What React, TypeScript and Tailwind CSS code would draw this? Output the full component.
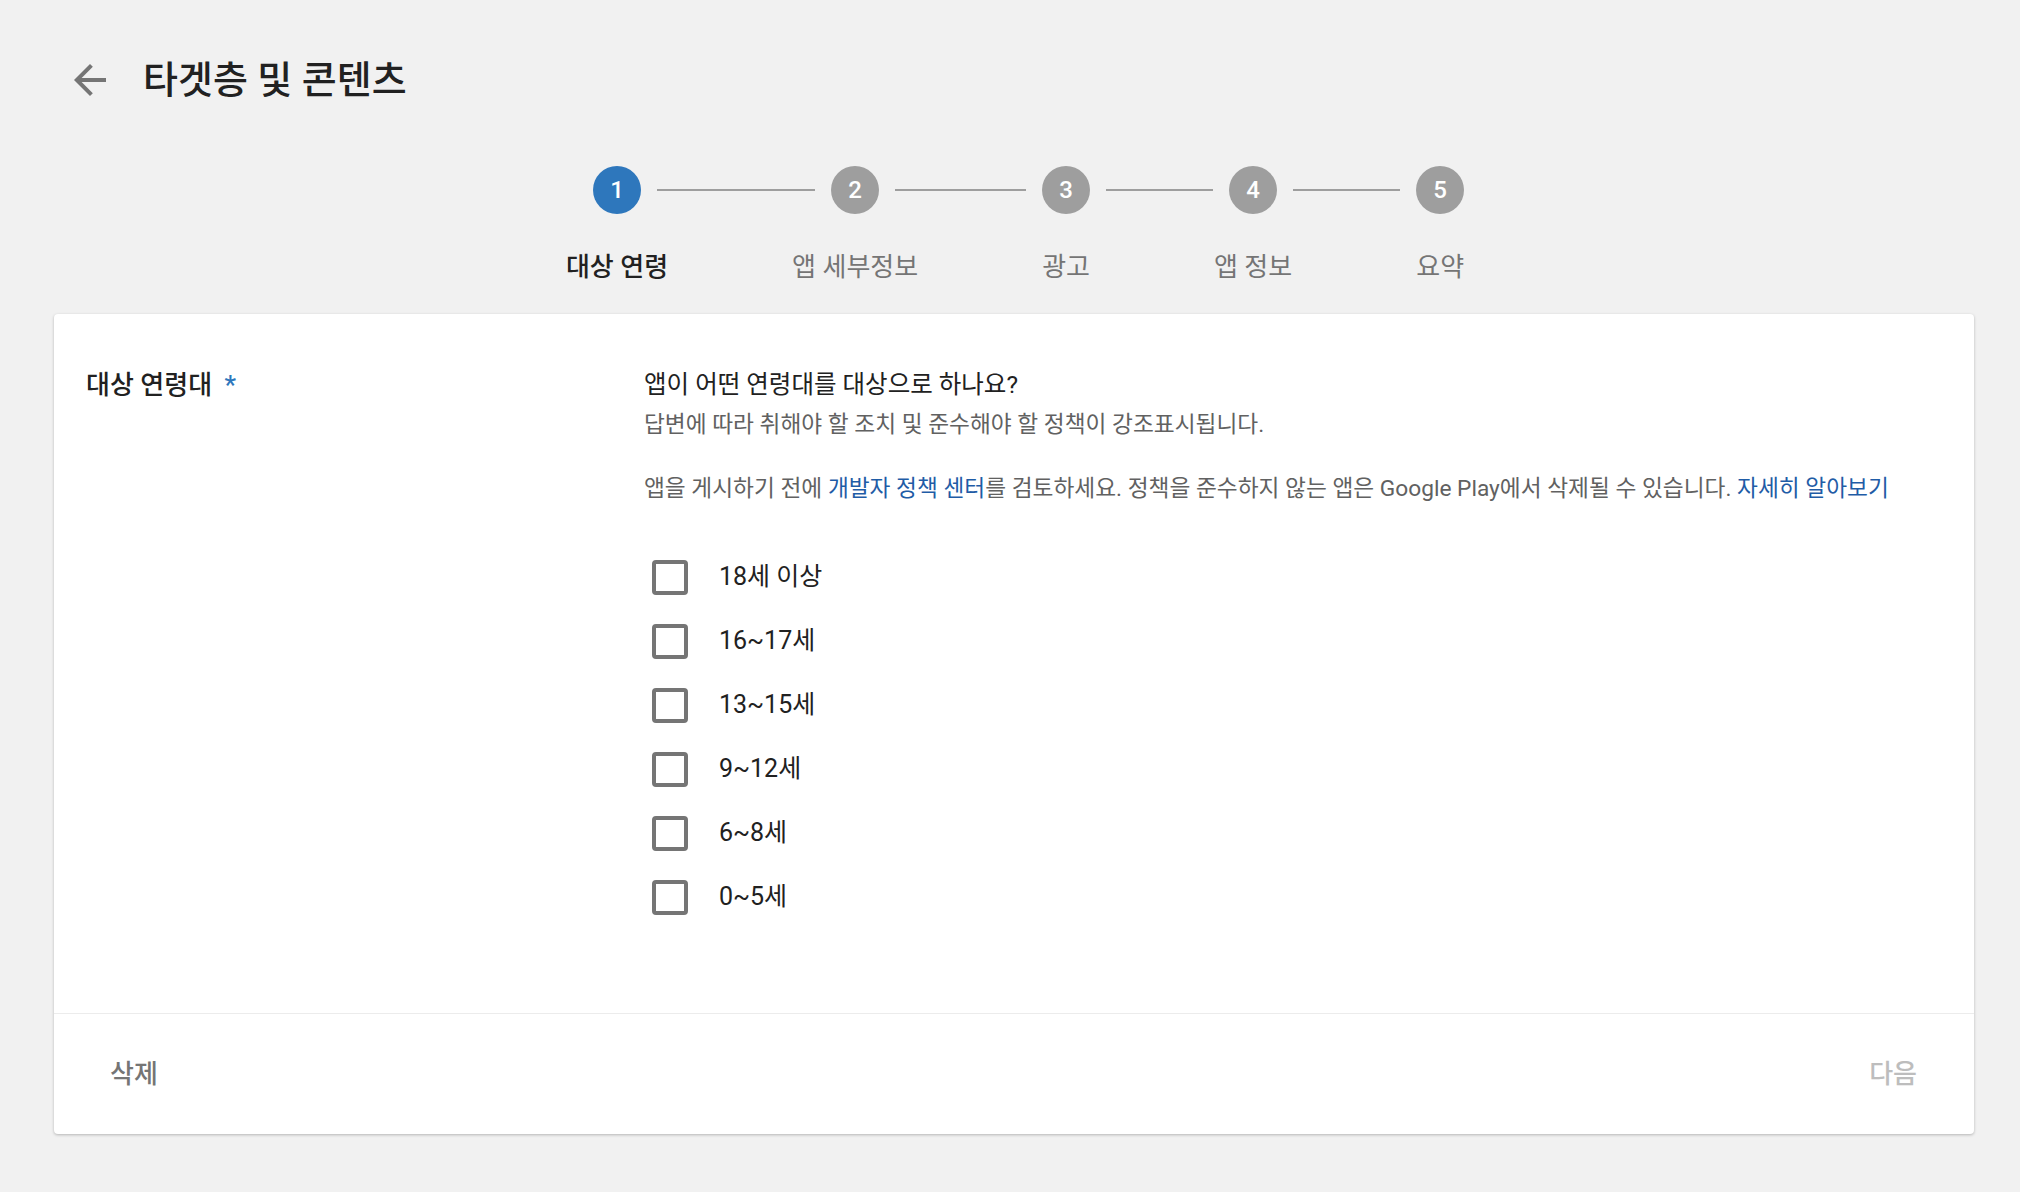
import { useState } from "react";

const STEPS = ["대상 연령", "앱 세부정보", "광고", "앱 정보", "요약"];

const AGE_GROUPS = ["18세 이상", "16~17세", "13~15세", "9~12세", "6~8세", "0~5세"];

export default function App() {
  const [checked, setChecked] = useState<Record<string, boolean>>({});

  return (
    <div
      className="min-h-[1192px] bg-[#f1f1f1] text-[#212121]"
      style={{ fontFamily: "Roboto, 'Noto Sans CJK KR', sans-serif" }}
    >
      <header className="flex items-center pl-[66px] pt-[56px]">
        <button type="button" className="h-[48px] w-[48px] text-[#757575]">
          <svg viewBox="0 0 24 24" className="h-[48px] w-[48px]" fill="currentColor">
            <path d="M20 11H7.83l5.59-5.59L12 4l-8 8 8 8 1.41-1.41L7.83 13H20v-2z" />
          </svg>
        </button>
        <h1 className="ml-[29px] text-[38px] leading-[48px] font-medium text-[#212121]">
          타겟층 및 콘텐츠
        </h1>
      </header>

      <Stepper active={0} />

      <main className="mx-[54px] mt-[31px] w-[1920px] rounded-[4px] bg-white shadow-[0_1px_3px_rgba(0,0,0,0.25)]">
        <div className="grid grid-cols-[558px_1fr] px-[32px] pt-[55px] pb-[84px]">
          <div className="text-[26px] leading-[32px] font-medium text-[#212121]">
            대상 연령대 <span className="ml-[6px] text-[#2e77bc]">*</span>
          </div>
          <div>
            <p className="text-[24.5px] leading-[32px] text-[#212121]">
              앱이 어떤 연령대를 대상으로 하나요?
            </p>
            <p className="mt-[10px] text-[22.7px] leading-[28px] text-[#616161]">
              답변에 따라 취해야 할 조치 및 준수해야 할 정책이 강조표시됩니다.
            </p>
            <p className="mt-[36px] text-[22.7px] leading-[28px] text-[#616161]">
              앱을 게시하기 전에 <a className="text-[#1f5ca6]">개발자 정책 센터</a>를 검토하세요.
              정책을 준수하지 않는 앱은 Google Play에서 삭제될 수 있습니다.{" "}
              <a className="text-[#1f5ca6]">자세히 알아보기</a>
            </p>
            <ul className="mt-[42px]">
              {AGE_GROUPS.map((age) => (
                <li key={age} className="flex h-[64px] items-center">
                  <button
                    type="button"
                    onClick={() => setChecked((c) => ({ ...c, [age]: !c[age] }))}
                    className="ml-[8px] h-[35px] w-[36px] rounded-[4px] border-[4px] border-[#757575] bg-white"
                  >
                    {checked[age] && (
                      <svg viewBox="0 0 24 24" className="h-full w-full" fill="#757575">
                        <path d="M9 16.17 4.83 12l-1.42 1.41L9 19 21 7l-1.41-1.41z" />
                      </svg>
                    )}
                  </button>
                  <span className="ml-[31px] text-[25px] text-[#212121]">{age}</span>
                </li>
              ))}
            </ul>
          </div>
        </div>

        <footer className="flex h-[121px] items-center justify-between border-t border-[#ececec] pl-[56px] pr-[57px]">
          <button type="button" className="text-[26px] font-medium text-[#757575]">
            삭제
          </button>
          <button type="button" className="text-[26px] font-medium text-[#bdbdbd]">
            다음
          </button>
        </footer>
      </main>
    </div>
  );
}

function Stepper({ active }: { active: number }) {
  return (
    <div className="mt-[62px] flex justify-center pl-[10px]">
      {STEPS.map((label, i) => (
        <div key={label} className="flex flex-col items-center px-[62px]">
          <div className="-mx-[62px] flex items-center self-stretch">
            <div className={`mr-[16px] h-[2px] flex-1 ${i === 0 ? "" : "bg-[#9e9e9e]"}`} />
            <div
              className={`flex h-[48px] w-[48px] shrink-0 items-center justify-center rounded-full text-[24px] font-medium text-white ${
                i === active ? "bg-[#2e77bc]" : "bg-[#9e9e9e]"
              }`}
            >
              {i + 1}
            </div>
            <div
              className={`ml-[16px] h-[2px] flex-1 ${i === STEPS.length - 1 ? "" : "bg-[#9e9e9e]"}`}
            />
          </div>
          <div
            className={`mt-[37px] whitespace-nowrap text-[26px] leading-[32px] ${
              i === active ? "font-medium text-[#212121]" : "text-[#757575]"
            }`}
          >
            {label}
          </div>
        </div>
      ))}
    </div>
  );
}
